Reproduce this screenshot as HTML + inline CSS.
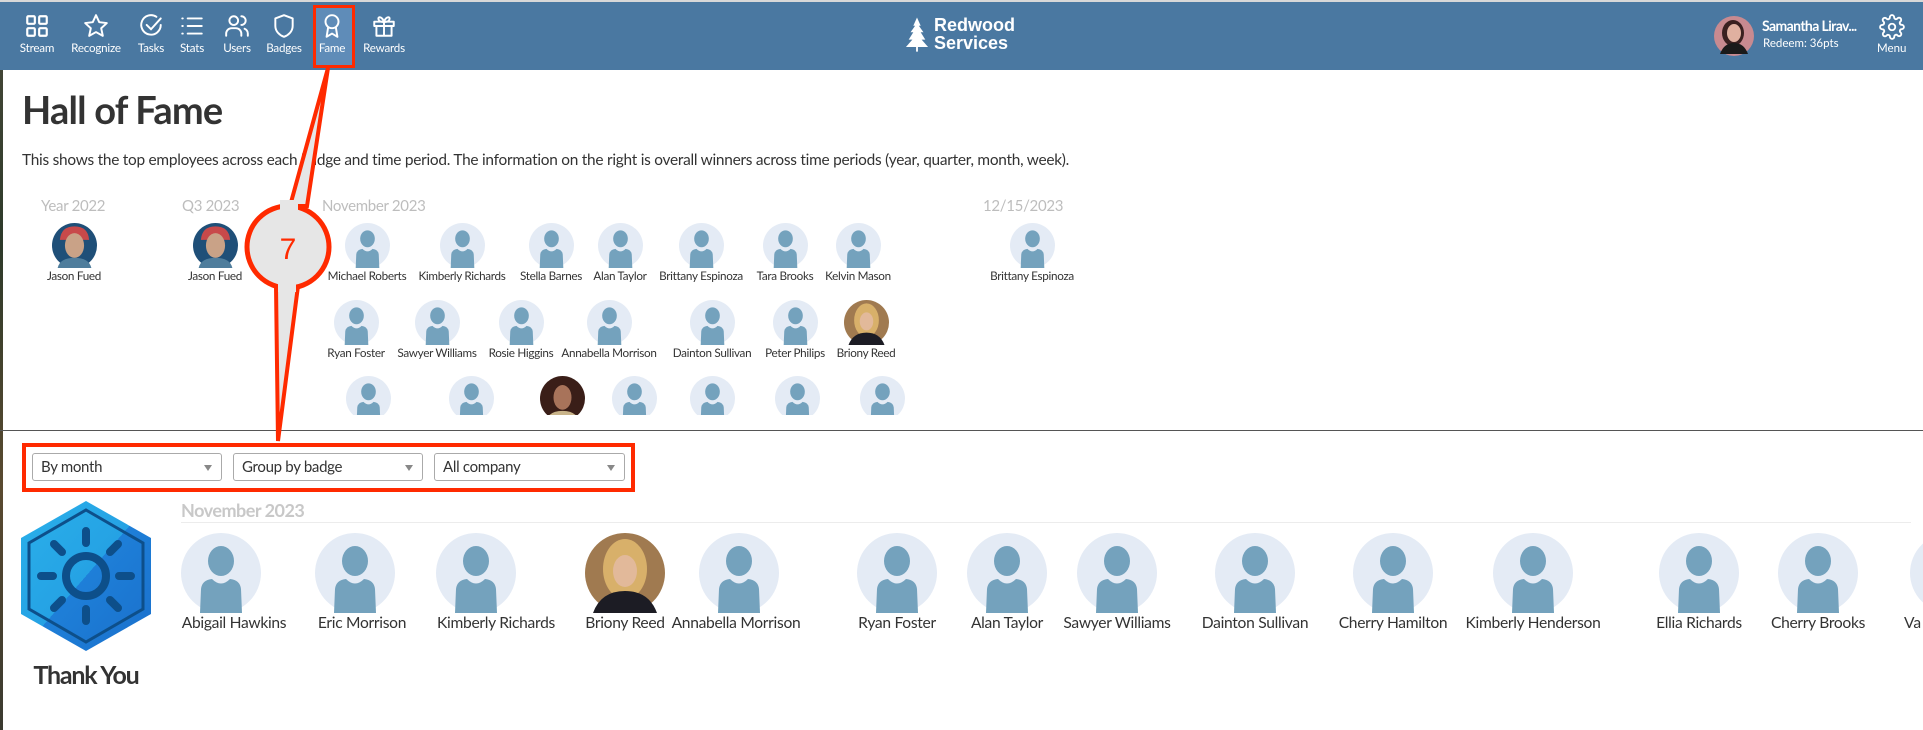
<!DOCTYPE html>
<html><head><meta charset="utf-8">
<style>
*{margin:0;padding:0;box-sizing:border-box}
body{width:1923px;height:730px;overflow:hidden;background:#fff;font-family:"Lato","Liberation Sans",sans-serif;position:relative;color:#333}
.a{position:absolute}
.nav{left:0;top:0;width:1923px;height:70px;background:#4a78a1;border-top:2px solid #d8d8d8}
.ni{position:absolute;top:0;width:60px;text-align:center;color:#fff;font-size:11.6px;letter-spacing:-0.2px}
.ni svg{position:absolute;top:11px;left:17px}
.ni span{position:absolute;top:40px;left:0;width:60px}
.nm{position:absolute;width:150px;text-align:center;font-size:11.7px;color:#333;letter-spacing:-0.3px;white-space:nowrap}
.bn{position:absolute;width:180px;text-align:center;font-size:15.6px;color:#333;letter-spacing:-0.3px;white-space:nowrap}
.hd{position:absolute;font-size:15px;color:#bdbdbd;letter-spacing:-0.3px}
.sel{position:absolute;top:453px;height:28px;border:1px solid #aaa;border-radius:3px;background:#fff;font-size:15px;color:#333;padding:4px 8px;letter-spacing:-0.3px}
.sel:after{content:"";position:absolute;right:9px;top:11px;border-left:4px solid transparent;border-right:4px solid transparent;border-top:6px solid #888}
</style></head><body>
<svg width="0" height="0" style="position:absolute"><defs>
<symbol id="av" viewBox="0 0 80 80"><circle cx="40" cy="40" r="40" fill="#e4ebf5"/><ellipse cx="40" cy="28" rx="13" ry="15" fill="#74a2bd"/><path d="M19 80 L20 56 Q21 47 31 46 Q40 55 49 46 Q59 47 60 56 L61 80 Z" fill="#74a2bd"/></symbol>
<symbol id="jf" viewBox="0 0 80 80"><circle cx="40" cy="40" r="40" fill="#1f4f78"/><path d="M14 30 Q16 6 40 6 Q64 6 66 30 Z" fill="#c8494a"/><ellipse cx="40" cy="40" rx="17" ry="22" fill="#c9a287"/><path d="M10 80 Q14 62 40 62 Q66 62 70 80Z" fill="#4f7d9c"/></symbol>
<symbol id="br" viewBox="0 0 80 80"><circle cx="40" cy="40" r="40" fill="#a07a50"/><ellipse cx="40" cy="36" rx="22" ry="30" fill="#d8b06a"/><ellipse cx="40" cy="38" rx="12" ry="16" fill="#e2b99a"/><path d="M8 80 Q16 58 40 58 Q64 58 72 80Z" fill="#1c1c24"/></symbol>
<symbol id="mm" viewBox="0 0 80 80"><circle cx="40" cy="40" r="40" fill="#3a1e18"/><ellipse cx="40" cy="38" rx="16" ry="22" fill="#a8735a"/><path d="M10 80 Q16 62 40 62 Q64 62 70 80Z" fill="#c9b48a"/></symbol>
<linearGradient id="hg" x1="0" y1="0" x2="1" y2="1"><stop offset="0" stop-color="#2ab0ea"/><stop offset="0.5" stop-color="#25a2e4"/><stop offset="0.5" stop-color="#1e7fd8"/><stop offset="1" stop-color="#1a70cc"/></linearGradient>
</defs></svg>

<div class="a" style="left:0;top:0;width:3px;height:730px;background:linear-gradient(#4a4a3a,#2d3a2a,#5a4a30,#3a3a30)"></div>

<div class="a nav">
  <div class="a" style="left:313px;top:3px;width:42px;height:63px;background:#5f8cb8;border:3px solid #ff2a00"></div>
  <div class="ni" style="left:7px"><svg width="26" height="26" viewBox="0 0 24 24" fill="none" stroke="#fff" stroke-width="2"><rect x="3" y="3" width="7" height="7" rx="1"/><rect x="14" y="3" width="7" height="7" rx="1"/><rect x="3" y="14" width="7" height="7" rx="1"/><rect x="14" y="14" width="7" height="7" rx="1"/></svg><span>Stream</span></div>
  <div class="ni" style="left:66px"><svg width="26" height="26" viewBox="0 0 24 24" fill="none" stroke="#fff" stroke-width="1.8" stroke-linejoin="round"><path d="M12 2l3 6.5 7 .8-5.2 4.8 1.5 7L12 17.6 5.7 21.1l1.5-7L2 9.3l7-.8z"/></svg><span>Recognize</span></div>
  <div class="ni" style="left:121px"><svg width="26" height="26" viewBox="0 0 24 24" fill="none" stroke="#fff" stroke-width="1.8" stroke-linecap="round"><path d="M21 11a9 9 0 1 1-4-7.5"/><path d="M8 11l4 4 9-10"/></svg><span>Tasks</span></div>
  <div class="ni" style="left:162px"><svg width="26" height="26" viewBox="0 0 24 24" fill="none" stroke="#fff" stroke-width="1.8" stroke-linecap="round"><path d="M8 5h13M8 12h13M8 19h13M3 5h.5M3 12h.5M3 19h.5"/></svg><span>Stats</span></div>
  <div class="ni" style="left:207px"><svg width="26" height="26" viewBox="0 0 24 24" fill="none" stroke="#fff" stroke-width="1.8" stroke-linecap="round"><circle cx="9" cy="7" r="4"/><path d="M2 21v-2a5 5 0 0 1 5-5h4a5 5 0 0 1 5 5v2M16 3a4 4 0 0 1 0 8M22 21v-2a5 5 0 0 0-3-4.5"/></svg><span>Users</span></div>
  <div class="ni" style="left:254px"><svg width="26" height="26" viewBox="0 0 24 24" fill="none" stroke="#fff" stroke-width="1.8" stroke-linejoin="round"><path d="M12 2l8 3v7c0 5-4 8.5-8 10-4-1.5-8-5-8-10V5z"/></svg><span>Badges</span></div>
  <div class="ni" style="left:302px"><svg width="26" height="26" viewBox="0 0 24 24" fill="none" stroke="#fff" stroke-width="1.8" stroke-linejoin="round"><circle cx="12" cy="8" r="6"/><path d="M8.5 13l-1.5 9 5-3 5 3-1.5-9"/></svg><span>Fame</span></div>
  <div class="ni" style="left:354px"><svg width="26" height="26" viewBox="0 0 24 24" fill="none" stroke="#fff" stroke-width="1.8" stroke-linejoin="round"><rect x="3" y="8" width="18" height="4"/><path d="M5 12v9h14v-9M12 8v13M12 8C10 3 6 3 7 6s5 2 5 2c0 0 4 1 5-2s-3-3-5 2"/></svg><span>Rewards</span></div>

  <svg class="a" style="left:905px;top:15px" width="24" height="36" viewBox="0 0 26 38" fill="#fff"><path d="M13 0 L17 9 L15 9 L20 16 L17 16 L22 24 L18 24 L25 32 L14 32 L14 37 L12 37 L12 32 L1 32 L8 24 L4 24 L9 16 L6 16 L11 9 L9 9Z"/></svg>
  <div class="a" style="left:934px;top:14px;color:#fff;font-family:'Liberation Sans',sans-serif;font-weight:bold;font-size:18px;line-height:18px">Redwood<br>Services</div>

  <svg class="a" style="left:1714px;top:14px" width="40" height="40" viewBox="0 0 40 40"><circle cx="20" cy="20" r="20" fill="#c88a90"/><ellipse cx="19" cy="17" rx="11" ry="13" fill="#3a2020"/><ellipse cx="20" cy="17" rx="7" ry="9" fill="#e0b0a0"/><path d="M6 38 Q10 27 20 27 Q30 27 34 38Z" fill="#1a1a1a"/></svg>
  <div class="a" style="left:1762px;top:15px;color:#fff;font-weight:bold;font-size:14px;letter-spacing:-0.6px">Samantha Lirav...</div>
  <div class="a" style="left:1763px;top:35px;color:#fff;font-size:11.5px">Redeem: 36pts</div>
  <svg class="a" style="left:1879px;top:12px" width="26" height="26" viewBox="0 0 24 24" fill="none" stroke="#fff" stroke-width="1.7"><circle cx="12" cy="12" r="3"/><path d="M19.4 15a1.7 1.7 0 0 0 .3 1.8l.1.1a2 2 0 1 1-2.8 2.8l-.1-.1a1.7 1.7 0 0 0-1.8-.3 1.7 1.7 0 0 0-1 1.5V21a2 2 0 1 1-4 0v-.1a1.7 1.7 0 0 0-1.1-1.5 1.7 1.7 0 0 0-1.8.3l-.1.1a2 2 0 1 1-2.8-2.8l.1-.1a1.7 1.7 0 0 0 .3-1.8 1.7 1.7 0 0 0-1.5-1H3a2 2 0 1 1 0-4h.1a1.7 1.7 0 0 0 1.5-1.1 1.7 1.7 0 0 0-.3-1.8l-.1-.1a2 2 0 1 1 2.8-2.8l.1.1a1.7 1.7 0 0 0 1.8.3H9a1.7 1.7 0 0 0 1-1.5V3a2 2 0 1 1 4 0v.1a1.7 1.7 0 0 0 1 1.5 1.7 1.7 0 0 0 1.8-.3l.1-.1a2 2 0 1 1 2.8 2.8l-.1.1a1.7 1.7 0 0 0-.3 1.8V9a1.7 1.7 0 0 0 1.5 1H21a2 2 0 1 1 0 4h-.1a1.7 1.7 0 0 0-1.5 1z"/></svg>
  <div class="a" style="left:1877px;top:40px;color:#fff;font-size:11.5px">Menu</div>
</div>

<div class="a" style="left:22px;top:87px;font-size:38px;font-weight:bold;color:#333;letter-spacing:-0.8px">Hall of Fame</div>
<div class="a" style="left:22px;top:151px;font-size:15.4px;color:#333;letter-spacing:-0.25px;white-space:nowrap">This shows the top employees across each badge and time period. The information on the right is overall winners across time periods (year, quarter, month, week).</div>

<div class="hd" style="left:41px;top:197px">Year 2022</div>
<div class="hd" style="left:182px;top:197px">Q3 2023</div>
<div class="hd" style="left:322px;top:197px">November 2023</div>
<div class="hd" style="left:983px;top:197px">12/15/2023</div>

<div class="a" style="left:0;top:0;width:1923px;height:415px;overflow:hidden">
<svg class="a" style="left:0;top:0" width="1923" height="420">
<use href="#jf" x="52" y="223" width="45" height="45"/>
<use href="#jf" x="193" y="223" width="45" height="45"/>
<use href="#av" x="345" y="223" width="45" height="45"/>
<use href="#av" x="440" y="223" width="45" height="45"/>
<use href="#av" x="529" y="223" width="45" height="45"/>
<use href="#av" x="598" y="223" width="45" height="45"/>
<use href="#av" x="679" y="223" width="45" height="45"/>
<use href="#av" x="763" y="223" width="45" height="45"/>
<use href="#av" x="836" y="223" width="45" height="45"/>
<use href="#av" x="1010" y="223" width="45" height="45"/>
<use href="#av" x="334" y="300" width="45" height="45"/>
<use href="#av" x="415" y="300" width="45" height="45"/>
<use href="#av" x="499" y="300" width="45" height="45"/>
<use href="#av" x="587" y="300" width="45" height="45"/>
<use href="#av" x="690" y="300" width="45" height="45"/>
<use href="#av" x="773" y="300" width="45" height="45"/>
<use href="#br" x="844" y="300" width="45" height="45"/>
<use href="#av" x="346" y="376" width="45" height="45"/>
<use href="#av" x="449" y="376" width="45" height="45"/>
<use href="#mm" x="540" y="376" width="45" height="45"/>
<use href="#av" x="612" y="376" width="45" height="45"/>
<use href="#av" x="690" y="376" width="45" height="45"/>
<use href="#av" x="775" y="376" width="45" height="45"/>
<use href="#av" x="860" y="376" width="45" height="45"/>
</svg>
</div>
<div class="nm" style="left:-1px;top:269px">Jason Fued</div>
<div class="nm" style="left:140px;top:269px">Jason Fued</div>
<div class="nm" style="left:292px;top:269px">Michael Roberts</div>
<div class="nm" style="left:387px;top:269px">Kimberly Richards</div>
<div class="nm" style="left:476px;top:269px">Stella Barnes</div>
<div class="nm" style="left:545px;top:269px">Alan Taylor</div>
<div class="nm" style="left:626px;top:269px">Brittany Espinoza</div>
<div class="nm" style="left:710px;top:269px">Tara Brooks</div>
<div class="nm" style="left:783px;top:269px">Kelvin Mason</div>
<div class="nm" style="left:957px;top:269px">Brittany Espinoza</div>
<div class="nm" style="left:281px;top:346px">Ryan Foster</div>
<div class="nm" style="left:362px;top:346px">Sawyer Williams</div>
<div class="nm" style="left:446px;top:346px">Rosie Higgins</div>
<div class="nm" style="left:534px;top:346px">Annabella Morrison</div>
<div class="nm" style="left:637px;top:346px">Dainton Sullivan</div>
<div class="nm" style="left:720px;top:346px">Peter Philips</div>
<div class="nm" style="left:791px;top:346px">Briony Reed</div>

<div class="a" style="left:0;top:430px;width:1923px;height:1px;background:#555"></div>

<div class="a" style="left:22px;top:443px;width:613px;height:49px;border:4px solid #ff2a00"></div>
<div class="sel" style="left:32px;width:190px">By month</div>
<div class="sel" style="left:233px;width:190px">Group by badge</div>
<div class="sel" style="left:434px;width:191px">All company</div>

<div class="a" style="left:181px;top:499px;font-size:18px;font-weight:bold;color:#c8c8c8;letter-spacing:-0.5px">November 2023</div>
<div class="a" style="left:181px;top:522px;width:1730px;height:1px;background:#ececec"></div>

<svg class="a" style="left:21px;top:501px" width="130" height="150" viewBox="0 0 130 150">
<polygon points="65,0 130,37 130,113 65,150 0,113 0,37" fill="url(#hg)"/>
<polygon points="65,9 122,42 122,108 65,141 8,108 8,42" fill="none" stroke="#0d4f8a" stroke-width="3"/>
<g stroke="#0d4f8a" stroke-width="8" stroke-linecap="round" fill="none">
<circle cx="65" cy="75" r="20"/>
<path d="M65 30v12M65 108v12M20 75h12M98 75h12M33 43l8 8M89 99l8 8M97 43l-8 8M41 99l-8 8"/>
</g></svg>
<div class="a" style="left:0;top:660px;width:172px;text-align:center;font-size:25px;font-weight:bold;color:#333;letter-spacing:-1.2px">Thank You</div>

<svg class="a" style="left:0;top:533px" width="1923" height="80">
<use href="#av" x="181" y="0" width="80" height="80"/>
<use href="#av" x="315" y="0" width="80" height="80"/>
<use href="#av" x="436" y="0" width="80" height="80"/>
<use href="#br" x="585" y="0" width="80" height="80"/>
<use href="#av" x="699" y="0" width="80" height="80"/>
<use href="#av" x="857" y="0" width="80" height="80"/>
<use href="#av" x="967" y="0" width="80" height="80"/>
<use href="#av" x="1077" y="0" width="80" height="80"/>
<use href="#av" x="1215" y="0" width="80" height="80"/>
<use href="#av" x="1353" y="0" width="80" height="80"/>
<use href="#av" x="1493" y="0" width="80" height="80"/>
<use href="#av" x="1659" y="0" width="80" height="80"/>
<use href="#av" x="1778" y="0" width="80" height="80"/>
<use href="#av" x="1910" y="0" width="80" height="80"/>
</svg>
<div class="bn" style="left:144px;top:614px">Abigail Hawkins</div>
<div class="bn" style="left:272px;top:614px">Eric Morrison</div>
<div class="bn" style="left:406px;top:614px">Kimberly Richards</div>
<div class="bn" style="left:535px;top:614px">Briony Reed</div>
<div class="bn" style="left:646px;top:614px">Annabella Morrison</div>
<div class="bn" style="left:807px;top:614px">Ryan Foster</div>
<div class="bn" style="left:917px;top:614px">Alan Taylor</div>
<div class="bn" style="left:1027px;top:614px">Sawyer Williams</div>
<div class="bn" style="left:1165px;top:614px">Dainton Sullivan</div>
<div class="bn" style="left:1303px;top:614px">Cherry Hamilton</div>
<div class="bn" style="left:1443px;top:614px">Kimberly Henderson</div>
<div class="bn" style="left:1609px;top:614px">Ellia Richards</div>
<div class="bn" style="left:1728px;top:614px">Cherry Brooks</div>
<div class="a" style="left:1904px;top:614px;font-size:15.6px;color:#333">Va</div>

<svg class="a" style="left:0;top:0" width="1923" height="730">
<polygon points="290,206 328,68 307,206" fill="#e6e6e6" stroke="#ff2a00" stroke-width="4" stroke-linejoin="miter"/>
<polygon points="276,286 278,441 298,286" fill="#e6e6e6" stroke="#ff2a00" stroke-width="4"/>
<circle cx="288" cy="247" r="41" fill="#e6e6e6" stroke="#ff2a00" stroke-width="5"/>
<rect x="280" y="200" width="18" height="10" fill="#e6e6e6"/>
<rect x="278" y="282" width="18" height="10" fill="#e6e6e6"/>
<text x="288" y="259" text-anchor="middle" font-family="Liberation Sans, sans-serif" font-size="30" fill="#ff2a00">7</text>
</svg>
</body></html>
